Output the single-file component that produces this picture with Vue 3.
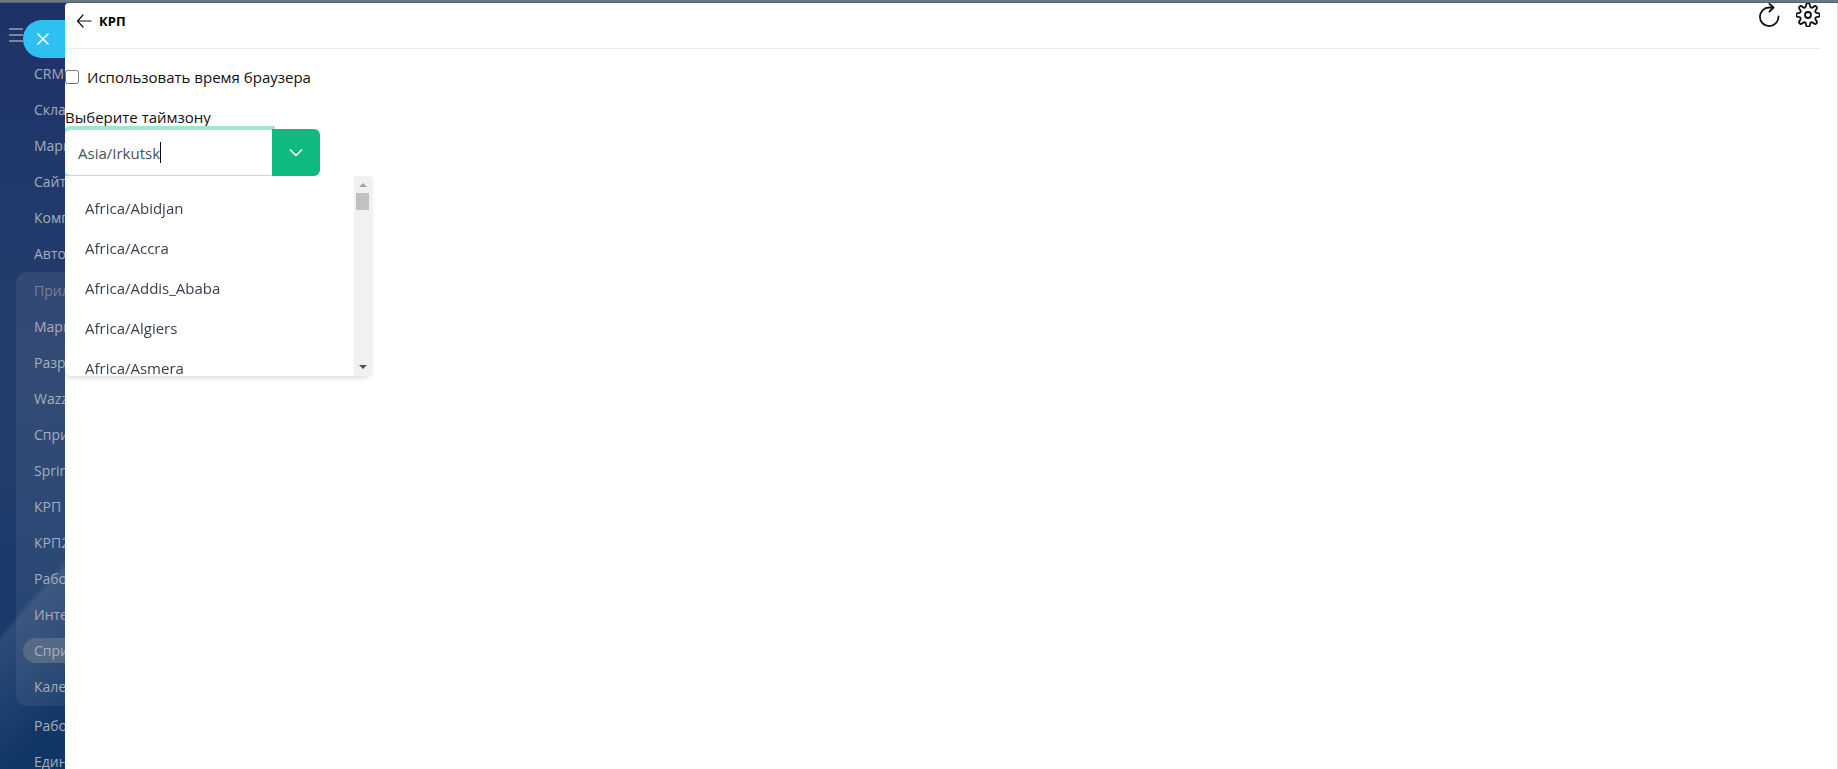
<template>
  <div class="page">
    <div class="topbar"></div>
    <div class="workspace">
      <aside class="sidebar">
        <div class="sidebar-head">
          <button class="burger" type="button" aria-label="Меню">
            <span></span><span></span><span></span>
          </button>
          <button class="slider-close" type="button" aria-label="Закрыть">
            <svg width="12" height="12" viewBox="0 0 12 12">
              <path d="M1 1L11 11M11 1L1 11" />
            </svg>
          </button>
        </div>
        <nav class="menu">
          <a v-for="item in topItems" :key="item" href="#">{{ item }}</a>
          <div class="menu-group">
            <a
              v-for="(item, i) in groupItems"
              :key="i"
              href="#"
              :class="{ muted: i === 0, active: i === activeItem }"
              ><span>{{ item }}</span></a
            >
          </div>
          <a v-for="item in bottomItems" :key="item" href="#">{{ item }}</a>
        </nav>
      </aside>

      <main class="panel">
        <header class="panel-header">
          <button class="icon-button back" type="button" aria-label="Назад">
            <svg width="16" height="14" viewBox="0 0 16 14">
              <path d="M7 1L1.500 7L7 13M1.500 7H15" />
            </svg>
          </button>
          <h1>КРП</h1>
          <div class="actions">
            <button class="icon-button" type="button" aria-label="Обновить">
              <svg width="24" height="24" viewBox="0 0 24 24">
                <path d="M21.500 13.500A9.300 9.300 0 1 1 12.200 4.500H16" />
                <path d="M12.500 0.800L16.500 4.500L12.500 8.500" />
              </svg>
            </button>
            <button class="icon-button" type="button" aria-label="Настройки">
              <svg width="24" height="24" viewBox="0 0 24 24">
                <path :d="gearPath" />
                <circle cx="12" cy="12" r="3" />
              </svg>
            </button>
          </div>
        </header>

        <form class="settings" @submit.prevent>
          <div class="check-row">
            <input id="browser-time" v-model="useBrowserTime" type="checkbox" />
            <label for="browser-time">Использовать время браузера</label>
          </div>
          <label class="field-label" for="timezone">Выберите таймзону</label>
          <div class="autocomplete">
            <input
              id="timezone"
              ref="zoneInput"
              v-model="timezone"
              type="text"
              autocomplete="off"
              spellcheck="false"
            />
            <span v-if="open" class="caret"></span>
            <button class="toggle" type="button" aria-label="Показать список" @click="open = !open">
              <svg width="14" height="8" viewBox="0 0 14 8">
                <path d="M1.500 1L7 6.500L12.500 1" />
              </svg>
            </button>
            <div v-if="open" class="dropdown">
              <ul>
                <li v-for="zone in zones" :key="zone" @click="select(zone)">{{ zone }}</li>
              </ul>
              <div class="scrollbar">
                <svg width="8" height="4" viewBox="0 0 8 4"><path d="M0 4L4 0L8 4Z" /></svg>
                <div class="thumb"></div>
                <svg class="down" width="8" height="4" viewBox="0 0 8 4">
                  <path d="M0 0L4 4L8 0Z" />
                </svg>
              </div>
            </div>
          </div>
        </form>
      </main>
    </div>
  </div>
</template>

<script setup>
import { ref, onMounted } from "vue";

const topItems = ["CRM", "Склад", "Марке", "Сайты", "Комп", "Автом"];
const groupItems = [
  "Прил",
  "Марке",
  "Разра",
  "Wazz",
  "Спри",
  "Spring",
  "КРП",
  "КРП2",
  "Рабоч",
  "Интег",
  "Спри",
  "Кален",
];
const bottomItems = ["Рабоч", "Едины"];
const activeItem = 10;

const zones = [
  "Africa/Abidjan",
  "Africa/Accra",
  "Africa/Addis_Ababa",
  "Africa/Algiers",
  "Africa/Asmera",
];

const useBrowserTime = ref(false);
const timezone = ref("Asia/Irkutsk");
const open = ref(true);
const zoneInput = ref(null);

function select(zone) {
  timezone.value = zone;
  open.value = false;
}

// eight rounded teeth around the centre of a 24x24 box
function buildGear() {
  const points = [];
  for (let i = 0; i < 8; i++) {
    for (const [angle, r] of [
      [-15, 8],
      [-8, 12],
      [8, 12],
      [15, 8],
    ]) {
      const a = ((i * 45 + angle) * Math.PI) / 180;
      points.push([12 + r * Math.sin(a), 12 - r * Math.cos(a)]);
    }
  }
  const mid = (p, q) => `${((p[0] + q[0]) / 2).toFixed(2)} ${((p[1] + q[1]) / 2).toFixed(2)}`;
  const n = points.length;
  let d = `M${mid(points[n - 1], points[0])}`;
  points.forEach((p, i) => {
    d += `Q${p[0].toFixed(2)} ${p[1].toFixed(2)} ${mid(p, points[(i + 1) % n])}`;
  });
  return `${d}Z`;
}
const gearPath = buildGear();

onMounted(() => {
  const end = timezone.value.length;
  zoneInput.value.focus();
  zoneInput.value.setSelectionRange(end, end);
});
</script>

<style>
body {
  margin: 0;
  overflow: hidden;
}
</style>

<style scoped>
* {
  box-sizing: border-box;
}

.page {
  display: flex;
  flex-direction: column;
  height: 100vh;
  overflow: hidden;
  font-family: "Open Sans", "Noto Sans", sans-serif;
  background-color: #1f3a69;
}

button {
  padding: 0;
  border: none;
  background: none;
  cursor: pointer;
}

svg {
  display: block;
  fill: none;
  stroke: currentColor;
  stroke-linecap: round;
  stroke-linejoin: round;
}

.topbar {
  flex: none;
  height: 3px;
  background-color: #6b7885;
  border-bottom: 1px solid #566273;
}

.workspace {
  display: flex;
  flex: 1;
  min-height: 0;
}

.sidebar {
  flex: none;
  width: 65px;
  overflow: hidden;
  background:
    linear-gradient(131deg, transparent 75%, rgba(255, 255, 255, 0.09) 76%, transparent 92%),
    linear-gradient(to bottom, #1e3268 0%, #21396b 25%, #243e6b 50%, #1b3b6b 75%, #103666 100%);
}

.sidebar-head {
  display: flex;
  align-items: flex-start;
  height: 52px;
  padding: 17px 0 0 9px;
}

.burger {
  display: flex;
  flex: none;
  flex-direction: column;
  gap: 4px;
  width: 14px;
  margin-top: 8px;
}
.burger span {
  height: 2px;
  background-color: #7987a3;
}

.slider-close {
  display: flex;
  flex: none;
  align-items: center;
  width: 80px;
  height: 38px;
  padding-left: 14px;
  border-radius: 19px 0 0 19px;
  color: #ffffff;
  background-color: #2fc0f2;
}
.slider-close svg {
  stroke-width: 1.5;
}

.menu a {
  display: flex;
  align-items: center;
  height: 36px;
  padding-left: 34px;
  font-size: 14px;
  font-weight: 500;
  white-space: nowrap;
  text-decoration: none;
  color: #a6adba;
}

.menu-group {
  width: 200px;
  margin: 1px 0 1px 16px;
  padding-bottom: 2px;
  border-radius: 10px;
  background-color: rgba(255, 255, 255, 0.07);
}
.menu-group a {
  padding-left: 7px;
}
.menu-group span {
  flex: 1;
  padding: 3px 11px;
  line-height: 19px;
}
.menu-group .muted {
  color: #74819b;
}
.menu-group .active span {
  border-radius: 13px;
  background-color: #566a86;
}

.panel {
  flex: 1;
  min-width: 0;
  border-right: 1px solid #d5dade;
  border-top-left-radius: 4px;
  background-color: #ffffff;
  overflow: hidden;
}

.panel-header {
  display: flex;
  align-items: flex-start;
  height: 46px;
  margin-right: 17px;
  border-bottom: 1px solid #ebebeb;
}
.panel-header h1 {
  margin: 8px 0 0 7px;
  font-size: 13px;
  line-height: 20px;
  font-weight: 700;
  color: #000000;
}

.icon-button {
  color: #111111;
}
.icon-button svg {
  stroke-width: 1.8;
}
.icon-button.back {
  margin: 11px 0 0 11px;
}
.icon-button.back svg {
  stroke-width: 1.2;
}

.actions {
  display: flex;
  gap: 15px;
  margin-left: auto;
}

.settings {
  padding-top: 16px;
  font-size: 15px;
  line-height: 24px;
  color: #111111;
}

.check-row {
  display: flex;
  align-items: center;
  gap: 8px;
  height: 24px;
}
.check-row input {
  width: 14px;
  height: 14px;
  margin: 0;
}

.field-label {
  display: block;
  width: max-content;
  margin-top: 16px;
  line-height: 24px;
}

.autocomplete {
  position: relative;
  display: flex;
  width: 255px;
  height: 47px;
}
.autocomplete input {
  flex: 1;
  min-width: 0;
  padding: 0 12px;
  border: 1px solid #ced4da;
  border-color: #a0e6cd #ffffff #ced4da;
  border-left-color: #ffffff;
  border-radius: 6px 0 0 6px;
  outline: none;
  font-family: inherit;
  font-size: 15px;
  color: #495057;
  caret-color: transparent;
  background-color: #ffffff;
  box-shadow: 0 0 0 3px #a0e6cd;
}
.caret {
  position: absolute;
  top: 13px;
  left: 95px;
  width: 1px;
  height: 21px;
  background-color: #111111;
}

.toggle {
  position: relative;
  display: flex;
  flex: none;
  align-items: center;
  justify-content: center;
  width: 48px;
  border-radius: 0 6px 6px 0;
  color: #ffffff;
  background-color: #10b981;
}
.toggle svg {
  stroke-width: 1.6;
}

.dropdown {
  position: absolute;
  top: 100%;
  left: 0;
  display: flex;
  width: 306px;
  height: 200px;
  border-radius: 0 0 6px 6px;
  background-color: #ffffff;
  box-shadow: 0 2px 5px rgba(0, 0, 0, 0.15);
  clip-path: inset(0 -10px -10px -10px);
}
.dropdown ul {
  flex: 1;
  margin: 0;
  padding: 12px 0;
  overflow: hidden;
  list-style: none;
}
.dropdown li {
  padding: 8px 20px;
  line-height: 24px;
  color: #374151;
  cursor: pointer;
}

.scrollbar {
  display: flex;
  flex-direction: column;
  align-items: center;
  width: 17px;
  padding: 7px 0;
  border-bottom-right-radius: 6px;
  background-color: #f1f1f1;
}
.scrollbar svg {
  flex: none;
  fill: #a3a3a3;
  stroke: none;
}
.scrollbar .down {
  margin-top: auto;
  fill: #505050;
}
.thumb {
  width: 13px;
  height: 17px;
  margin-top: 6px;
  background-color: #c1c1c1;
}
</style>
